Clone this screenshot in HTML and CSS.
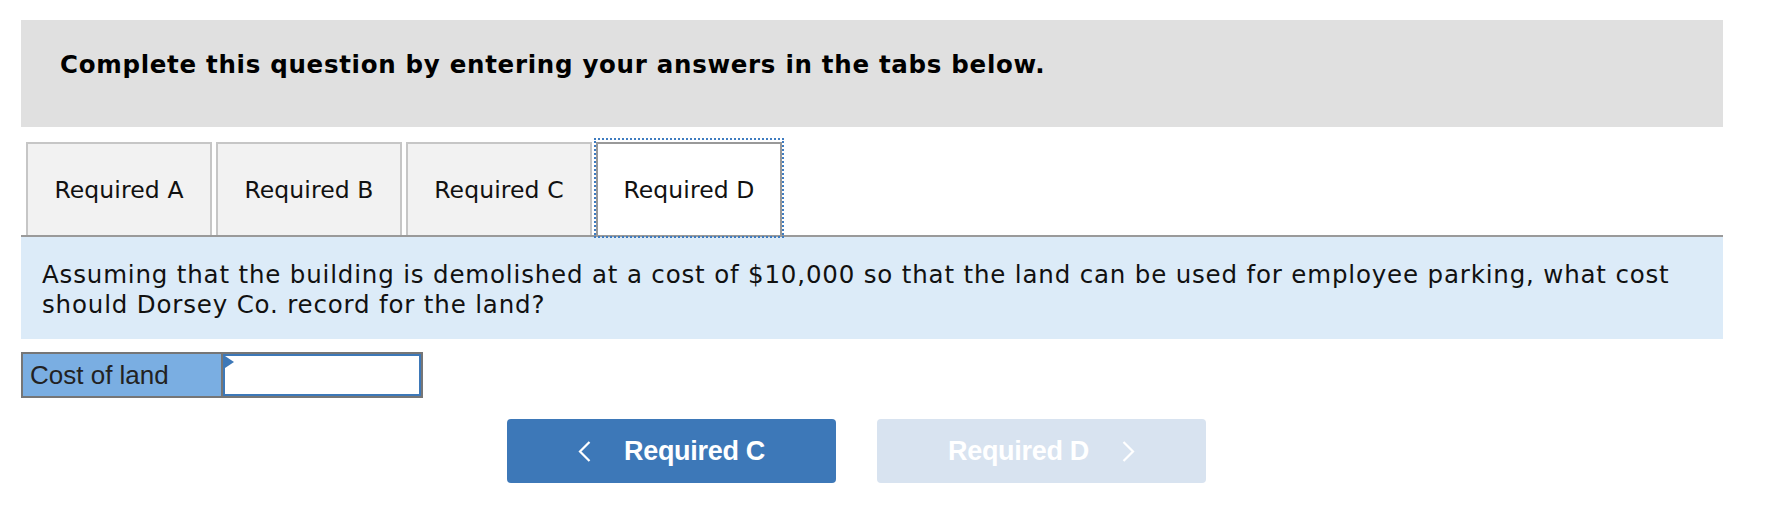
FILE: index.html
```html
<!DOCTYPE html>
<html lang="en">
<head>
<meta charset="utf-8">
<title>Required D</title>
<link rel="stylesheet" href="styles.css">
</head>
<body>
<div class="wrap">
  <div class="banner">Complete this question by entering your answers in the tabs below.</div>

  <div class="tabs">
    <div class="tab">Required A</div>
    <div class="tab">Required B</div>
    <div class="tab">Required C</div>
    <div class="tab active">Required D</div>
  </div>

  <div class="question">Assuming that the building is demolished at a cost of $10,000 so that the land can be used for employee parking, what cost should Dorsey Co. record for the land?</div>

  <div class="field">
    <div class="field-label">Cost of land</div>
    <div class="field-input"></div>
  </div>

  <div class="nav">
    <div class="btn">
      <svg class="chev" width="13" height="21" viewBox="0 0 13 21"><polyline points="11.5,1 2,10.5 11.5,20" fill="none" stroke="#fff" stroke-width="2.2"/></svg>
      <span>Required C</span>
    </div>
    <div class="btn disabled">
      <span>Required D</span>
      <svg class="chev" width="13" height="21" viewBox="0 0 13 21"><polyline points="1.5,1 11,10.5 1.5,20" fill="none" stroke="#fff" stroke-width="2.2"/></svg>
    </div>
  </div>
</div>
</body>
</html>
```

FILE: styles.css
```css
html, body {
  margin: 0;
  padding: 0;
  background: #fff;
}

.wrap {
  margin-left: 21px;
  width: 1702px;
  font-family: "DejaVu Sans", Verdana, sans-serif;
  color: #111;
}

.banner {
  margin-top: 20px;
  height: 107px;
  box-sizing: border-box;
  background: #e0e0e0;
  padding: 30px 0 0 39px;
  font-weight: bold;
  font-size: 24.5px;
  letter-spacing: 0.7px;
  line-height: 30px;
  color: #000;
}

.tabs {
  display: flex;
  gap: 4px;
  margin-top: 15px;
  padding-left: 5px;
  border-bottom: 2px solid #9a9a9a;
}

.tab {
  width: 186px;
  height: 93px;
  box-sizing: border-box;
  border: 2px solid #c6c6c6;
  border-bottom: none;
  background: #f2f2f2;
  display: flex;
  align-items: center;
  justify-content: center;
  font-size: 23.5px;
  letter-spacing: 0.1px;
  color: #111;
}

.tab.active {
  position: relative;
  background: #fff;
  border-color: #999;
}

.tab.active::after {
  content: "";
  position: absolute;
  left: -4px;
  right: -4px;
  top: -6px;
  bottom: -3px;
  border: 2px dotted #3f7cc0;
}

.question {
  background: #dcebf8;
  padding: 23px 21px 19px 21px;
  font-size: 24.5px;
  letter-spacing: 0.83px;
  line-height: 30px;
  color: #111;
}

.field {
  display: flex;
  width: 402px;
  height: 46px;
  box-sizing: border-box;
  margin-top: 13px;
  border: 2px solid #767676;
}

.field-label {
  width: 200px;
  box-sizing: border-box;
  background: #7aaee2;
  border-right: 2px solid #767676;
  padding-left: 7px;
  display: flex;
  align-items: center;
  font-family: "Liberation Sans", Arial, sans-serif;
  font-size: 26px;
  color: #222;
}

.field-input {
  flex: 1;
  position: relative;
  background: #fff;
  border: 2px solid #3d78b8;
}

.field-input::before {
  content: "";
  position: absolute;
  left: 0;
  top: 0;
  border-top: 6px solid transparent;
  border-bottom: 6px solid transparent;
  border-left: 9px solid #3d78b8;
}

.nav {
  display: flex;
  gap: 41px;
  margin-top: 21px;
  padding-left: 486px;
}

.btn {
  width: 329px;
  height: 64px;
  border-radius: 4px;
  background: #3d78b8;
  display: flex;
  align-items: center;
  justify-content: center;
  gap: 33px;
  font-family: "Liberation Sans", Arial, sans-serif;
  font-weight: bold;
  font-size: 27px;
  letter-spacing: -0.3px;
  color: #fff;
}

.btn.disabled {
  background: #d8e3f0;
}

.chev {
  display: block;
}
```
